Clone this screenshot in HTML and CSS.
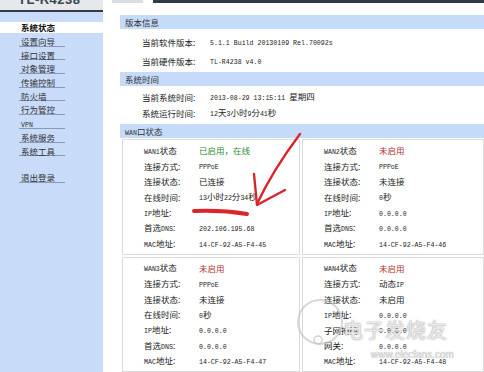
FILE: index.html
```html
<!DOCTYPE html>
<html>
<head>
<meta charset="utf-8">
<link rel="stylesheet" href="styles.css">
</head>
<body>
<div class="page">

<div class="side">
  <div class="brand"><span>TL-R4238</span></div>
  <div class="brandline"></div>
  <ul class="menu">
    <li class="on">系统状态</li>
    <li>设置向导</li>
    <li>接口设置</li>
    <li>对象管理</li>
    <li>传输控制</li>
    <li>防火墙</li>
    <li>行为管控</li>
    <li><span class="n">VPN</span></li>
    <li>系统服务</li>
    <li>系统工具</li>
    <li class="gap"></li>
    <li>退出登录</li>
  </ul>
</div>

<div class="main">
  <div class="topbar"><i class="tab"></i><i class="bar"></i></div>

  <div class="block">
    <h3>版本信息</h3>
    <table class="info first">
      <tr><td class="lbl">当前软件版本:</td><td><span class="n">5.1.1 Build 20130109 Rel.70092s</span></td></tr>
      <tr><td class="lbl">当前硬件版本:</td><td><span class="n">TL-R4238 v4.0</span></td></tr>
    </table>
  </div>

  <div class="block">
    <h3>系统时间</h3>
    <table class="info second">
      <tr><td class="lbl">当前系统时间:</td><td><span class="n">2013-08-29 13:15:11 </span>星期四</td></tr>
      <tr><td class="lbl">系统运行时间:</td><td><span class="n">12</span>天<span class="n">3</span>小时<span class="n">9</span>分<span class="n">41</span>秒</td></tr>
    </table>
  </div>

  <div class="block">
    <h3><span class="n">WAN</span>口状态</h3>
    <div class="wans">
      <table class="wan">
        <tr><td class="lbl"><span class="n">WAN1</span>状态</td><td class="ok">已启用，在线</td></tr>
        <tr><td class="lbl">连接方式:</td><td><span class="n">PPPoE</span></td></tr>
        <tr><td class="lbl">连接状态:</td><td>已连接</td></tr>
        <tr><td class="lbl">在线时间:</td><td><span class="n">13</span>小时<span class="n">22</span>分<span class="n">34</span>秒</td></tr>
        <tr><td class="lbl"><span class="n">IP</span>地址:</td><td></td></tr>
        <tr><td class="lbl">首选<span class="n">DNS</span>:</td><td><span class="n">202.106.195.68</span></td></tr>
        <tr><td class="lbl"><span class="n">MAC</span>地址:</td><td><span class="n">14-CF-92-A5-F4-45</span></td></tr>
      </table>
      <table class="wan">
        <tr><td class="lbl"><span class="n">WAN2</span>状态</td><td class="off">未启用</td></tr>
        <tr><td class="lbl">连接方式:</td><td><span class="n">PPPoE</span></td></tr>
        <tr><td class="lbl">连接状态:</td><td>未连接</td></tr>
        <tr><td class="lbl">在线时间:</td><td><span class="n">0</span>秒</td></tr>
        <tr><td class="lbl"><span class="n">IP</span>地址:</td><td><span class="n">0.0.0.0</span></td></tr>
        <tr><td class="lbl">首选<span class="n">DNS</span>:</td><td><span class="n">0.0.0.0</span></td></tr>
        <tr><td class="lbl"><span class="n">MAC</span>地址:</td><td><span class="n">14-CF-92-A5-F4-46</span></td></tr>
      </table>
      <table class="wan">
        <tr><td class="lbl"><span class="n">WAN3</span>状态</td><td class="off">未启用</td></tr>
        <tr><td class="lbl">连接方式:</td><td><span class="n">PPPoE</span></td></tr>
        <tr><td class="lbl">连接状态:</td><td>未连接</td></tr>
        <tr><td class="lbl">在线时间:</td><td><span class="n">0</span>秒</td></tr>
        <tr><td class="lbl"><span class="n">IP</span>地址:</td><td><span class="n">0.0.0.0</span></td></tr>
        <tr><td class="lbl">首选<span class="n">DNS</span>:</td><td><span class="n">0.0.0.0</span></td></tr>
        <tr><td class="lbl"><span class="n">MAC</span>地址:</td><td><span class="n">14-CF-92-A5-F4-47</span></td></tr>
      </table>
      <table class="wan">
        <tr><td class="lbl"><span class="n">WAN4</span>状态</td><td class="off">未启用</td></tr>
        <tr><td class="lbl">连接方式:</td><td>动态<span class="n">IP</span></td></tr>
        <tr><td class="lbl">连接状态:</td><td>未启用</td></tr>
        <tr><td class="lbl"><span class="n">IP</span>地址:</td><td><span class="n">0.0.0.0</span></td></tr>
        <tr><td class="lbl">子网掩码:</td><td><span class="n">0.0.0.0</span></td></tr>
        <tr><td class="lbl">网关:</td><td><span class="n">0.0.0.0</span></td></tr>
        <tr><td class="lbl"><span class="n">MAC</span>地址:</td><td><span class="n">14-CF-92-A5-F4-48</span></td></tr>
      </table>
    </div>
  </div>
</div>

<!-- hand drawn marks on top of the screenshot -->
<svg class="scribble" width="484" height="372" viewBox="0 0 484 372">
  <path d="M300 134 C 288 150, 270 176, 257 204" fill="none" stroke="#d9262a" stroke-width="2.4" stroke-linecap="round"/>
  <path d="M254 174 L 257 205 L 285 190" fill="none" stroke="#d9262a" stroke-width="2.4" stroke-linecap="round" stroke-linejoin="round"/>
  <path d="M194 211 C 215 210, 235 212, 247 214" fill="none" stroke="#d9262a" stroke-width="4" stroke-linecap="round"/>
  <circle cx="320" cy="322" r="22" fill="none" stroke="rgba(190,190,190,0.6)" stroke-width="2"/>
  <circle cx="318" cy="340" r="4" fill="none" stroke="rgba(190,190,190,0.7)" stroke-width="1.5"/>
</svg>
<div class="wm">
  <div class="wm-big">电子发烧友</div>
  <div class="wm-url">www.elecfans.com</div>
</div>

</div>
</body>
</html>
```

FILE: styles.css
```css
body {
 margin: 0;
 background: #fff;
 color: #222;
 font-family: "Noto Sans CJK SC", sans-serif;
 font-size: 8.5px;
 line-height: 11px;
}

.page {position: relative; width: 484px; height: 372px; overflow: hidden; display: flex}

.n {font-family: "Liberation Mono", "Noto Sans CJK SC", monospace; font-size: 6.6px; line-height: 8px}

/* left menu */
.side {width: 103px; flex: none; background: #c8dbf8; height: 372px}
.brand {height: 10px; background: #e6e8ec; overflow: hidden}
.brand span {display: block; margin-top: -8px; padding-left: 18px; font-family: "Liberation Sans", sans-serif; font-size: 13px; line-height: 15px; font-weight: bold; color: #3c4652; letter-spacing: 0.5px}
.brandline {height: 2px; background: #2f3b47}
.menu {list-style: none; margin: 0; padding: 10px 0 0 0}
.menu li {margin-left: 19px; width: 44px; padding-left: 2px; height: 9.7px; padding-top: 3px; line-height: 11px; border-bottom: 1px solid #8898b6; color: #333}
.menu li.on {margin-left: 0; width: auto; padding: 0 0 0 21px; height: 11px; line-height: 11px; border: none; background: #fff; font-weight: bold; color: #111}
.menu li.gap {border: none}

/* right part */
.main {flex: 1; margin-left: 7px; min-width: 0}
.topbar {display: flex; height: 3px; padding-left: 2px; margin-bottom: 12px}
.topbar .tab {width: 31px; background: #dadde2; margin-right: 10px}
.topbar .bar {flex: 1; background: #2f3b47}

.block {margin-left: 10px}
h3 {margin: 0; height: 14px; line-height: 14px; padding-left: 5px; background: #c6daf9; font-size: 8.5px; font-weight: normal; color: #333}

.info {border-collapse: collapse}
.info td {padding: 0; white-space: nowrap; line-height: 11px}
.info .lbl {padding-left: 22px; width: 68px}
.info.first {margin: 3.5px 0 1.5px 0}
.info.first td {height: 19px}
.info.second {margin: 3px 0 3px 0}
.info.second td {height: 16px}

.wans {display: grid; grid-template-columns: 178px 182px; gap: 2px; margin: 1px 0 0 2px}
.wan {border: 1px solid #dcdcdc; border-collapse: separate; border-spacing: 0; padding: 3px 0 2px 0; width: 100%}
.wan td {padding: 0; height: 15.5px; white-space: nowrap; line-height: 11px}
.wan .lbl {padding-left: 21px; width: 55px}
.ok {color: #2e8b2e}
.off {color: #b3302e}

/* overlays */
.scribble {position: absolute; left: 0; top: 0; pointer-events: none}
.wm {position: absolute; left: 343px; top: 318px; pointer-events: none}
.wm-big {font-size: 20px; line-height: 24px; color: rgba(255,255,255,0.8); text-shadow: 0 0 1px #999, 0 0 2px #bbb; letter-spacing: 1px}
.wm-url {margin: 7px 0 0 28px; font-family: "Liberation Sans", sans-serif; font-size: 10px; line-height: 12px; color: rgba(235,235,240,0.95); text-shadow: 0 0 1px #888}
```
